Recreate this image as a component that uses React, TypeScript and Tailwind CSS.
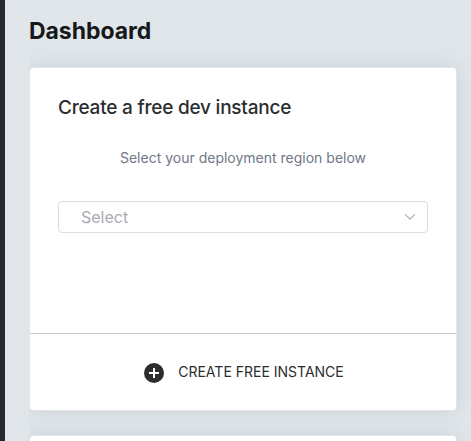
function Card({ children }: { children?: React.ReactNode }) {
  return (
    <section className="w-[428px] h-[344px] shrink-0 rounded-[4px] border border-[#e0e4eb] bg-white shadow-[0_0_18px_rgba(100,125,130,0.2)]">
      {children}
    </section>
  );
}

export default function App() {
  return (
    <div className="flex h-[441px] w-[471px] overflow-hidden bg-[#e1e6ea] font-['Inter','Liberation_Sans',sans-serif]">
      <aside className="w-[5px] shrink-0 bg-[#25292d]" />
      <main className="ml-6 flex flex-1 flex-col overflow-hidden">
        <h1 className="h-[67px] shrink-0 whitespace-nowrap pt-[15px] text-[23px] leading-[32px] font-bold tracking-[-0.05px] text-[#16191b]">
          Dashboard
        </h1>
        <Card>
          <div className="flex h-[266px] flex-col border-b border-[#c5cdd0] px-7">
            <h2 className="mt-[26px] whitespace-nowrap text-[19px] leading-[28px] font-medium tracking-[-0.22px] text-[#2b2d2f]">
              Create a free dev instance
            </h2>
            <p className="mt-[26px] whitespace-nowrap text-center text-sm leading-[20px] text-[#6f7787]">
              Select your deployment region below
            </p>
            <button className="mt-[33px] flex h-8 w-[370px] items-center justify-between rounded-[4px] border border-[#dcdde4] pr-[11px] pl-[22px] text-base text-[#a9abb3]">
              <span>Select</span>
              <svg width="12" height="8" viewBox="0 0 12 8" fill="none" stroke="#a9abb3" strokeWidth="1.1">
                <path d="M1 1.2 6 6.2 11 1.2" />
              </svg>
            </button>
          </div>
          <button className="flex h-[76px] w-full items-center justify-center gap-[14px] pl-[2px] text-sm text-[#2b2d2f]">
            <svg width="20" height="20" viewBox="0 0 20 20" className="mt-[2px]">
              <circle cx="10" cy="10" r="10" fill="#2b2d2f" />
              <path d="M10 5v10M5 10h10" stroke="white" strokeWidth="2" />
            </svg>
            <span className="whitespace-nowrap">CREATE FREE INSTANCE</span>
          </button>
        </Card>
        <div className="h-6 shrink-0" />
        <Card />
      </main>
    </div>
  );
}
